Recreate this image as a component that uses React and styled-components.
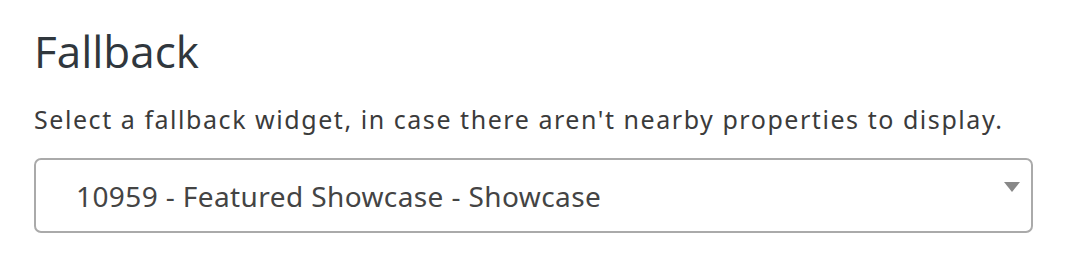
import styled, { createGlobalStyle } from 'styled-components';

const GlobalStyle = createGlobalStyle`
  body {
    margin: 0;
    background: #ffffff;
  }
`;

const Section = styled.div`
  padding: 22px 49px 0 34px;
  font-family: 'Noto Sans', 'Open Sans', sans-serif;
`;

const Title = styled.h2`
  margin: 0;
  font-family: 'Open Sans', 'Noto Sans', sans-serif;
  font-size: 44px;
  font-weight: 400;
  line-height: 58px;
  color: #30373d;
`;

const Hint = styled.p`
  margin: 24px 0 0 0;
  font-size: 25px;
  letter-spacing: 1.55px;
  line-height: 30px;
  color: #3b3b3b;
  white-space: nowrap;
`;

const SelectBox = styled.div`
  margin-top: 24px;
  height: 75px;
  box-sizing: border-box;
  border: 2px solid #aaaaaa;
  border-radius: 7px;
  display: flex;
  align-items: center;
  padding: 0 11px 0 40px;
`;

const Value = styled.span`
  flex: 1;
  font-size: 28px;
  letter-spacing: 0.4px;
  color: #444444;
  white-space: nowrap;
`;

const Caret = styled.span`
  width: 0;
  height: 0;
  border-left: 8px solid transparent;
  border-right: 8px solid transparent;
  border-top: 10px solid #888888;
  margin-bottom: 17px;
`;

const App = () => {
  return (
    <>
      <GlobalStyle />
      <Section>
        <Title>Fallback</Title>
        <Hint>Select a fallback widget, in case there aren't nearby properties to display.</Hint>
        <SelectBox>
          <Value>10959 - Featured Showcase - Showcase</Value>
          <Caret />
        </SelectBox>
      </Section>
    </>
  );
};

export default App;
